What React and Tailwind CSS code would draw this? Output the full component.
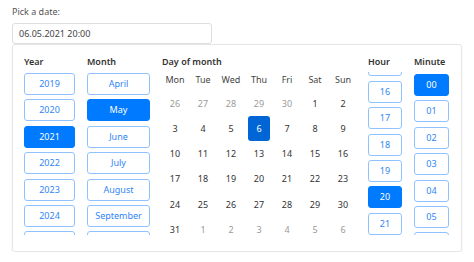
import React, { useEffect, useRef } from "react";

const years = [2019, 2020, 2021, 2022, 2023, 2024, 2025];
const months = ["April", "May", "June", "July", "August", "September", "October"];
const hours = [14, 15, 16, 17, 18, 19, 20, 21, 22];
const minutes = ["00", "01", "02", "03", "04", "05", "06"];
const weekdays = ["Mon", "Tue", "Wed", "Thu", "Fri", "Sat", "Sun"];

// 6 weeks, first row starts in April
const weeks = [
  [[26, 0], [27, 0], [28, 0], [29, 0], [30, 0], [1, 1], [2, 1]],
  [[3, 1], [4, 1], [5, 1], [6, 1], [7, 1], [8, 1], [9, 1]],
  [[10, 1], [11, 1], [12, 1], [13, 1], [14, 1], [15, 1], [16, 1]],
  [[17, 1], [18, 1], [19, 1], [20, 1], [21, 1], [22, 1], [23, 1]],
  [[24, 1], [25, 1], [26, 1], [27, 1], [28, 1], [29, 1], [30, 1]],
  [[31, 1], [1, 0], [2, 0], [3, 0], [4, 0], [5, 0], [6, 0]],
];

const PickButton = ({ label, active }) => (
  <button
    className={`h-[22px] w-full shrink-0 rounded-[3px] border text-center leading-[20px] ${
      active
        ? "border-[#007bff] bg-[#007bff] text-white"
        : "border-[#8fc3ff] bg-white text-[#2f86f6]"
    }`}
  >
    {label}
  </button>
);

const ScrollColumn = ({ title, items, selected, width, scroll = 0, pad = "pt-[1px]", className = "" }) => {
  const ref = useRef(null);

  useEffect(() => {
    if (ref.current) ref.current.scrollTop = scroll;
  }, [scroll]);

  return (
    <div className={`flex flex-col ${width} ${className}`}>
      <div className="h-[12px] font-semibold leading-[12px] text-[#333]">{title}</div>
      <div ref={ref} className="mt-[4px] h-[163px] overflow-hidden">
        <div className={`flex flex-col gap-[4.4px] ${pad}`}>
          {items.map((it) => (
            <PickButton key={it} label={it} active={it === selected} />
          ))}
        </div>
      </div>
    </div>
  );
};

export default function App() {
  return (
    <div className="bg-white px-3 pt-[6px] font-['Noto_Sans',sans-serif] text-[9px] text-[#333]">
      <div className="h-[12px] leading-[12px] text-[#555]">Pick a date:</div>

      <div className="mt-[5px] flex h-[21px] w-[200px] items-center rounded-[3px] border border-[#dedede] pl-[6px] text-[#444]">
        06.05.2021 20:00
      </div>

      {/* popup */}
      <div className="flex h-[208px] w-[450px] rounded-[3px] border border-[#e6e6e6] bg-white pl-[11px] pt-[11px] shadow-[0_1px_3px_rgba(0,0,0,0.05)]">
        <ScrollColumn title="Year" items={years} selected={2021} width="w-[51px]" />
        <ScrollColumn title="Month" items={months} selected="May" width="w-[63px]" className="ml-[12px]" />

        {/* day of month */}
        <div className="ml-[11px] flex w-[196px] flex-col">
          <div className="h-[12px] pl-[1px] font-semibold leading-[12px] text-[#333]">Day of month</div>
          <div className="grid h-[23px] grid-cols-7 items-center text-center text-[#444]">
            {weekdays.map((d) => (
              <span key={d}>{d}</span>
            ))}
          </div>
          {weeks.map((week, wi) => (
            <div key={wi} className="grid h-[25.2px] grid-cols-7 items-center text-center">
              {week.map(([d, cur], di) => {
                const sel = wi === 1 && d === 6;
                return (
                  <div key={di} className="flex items-center justify-center">
                    {sel ? (
                      <span className="flex h-[25px] w-[22px] items-center justify-center rounded-[3px] bg-[#0066d6] text-white">
                        {d}
                      </span>
                    ) : (
                      <span className={cur ? "text-[#333]" : "text-[#9a9a9a]"}>{d}</span>
                    )}
                  </div>
                );
              })}
            </div>
          ))}
        </div>

        <ScrollColumn title="Hour" items={hours} selected={20} width="w-[34px]" className="ml-[11px]" pad="pt-0" scroll={44} />
        <ScrollColumn title="Minute" items={minutes} selected="00" width="w-[35px]" className="ml-[12px]" pad="pt-[2px]" />
      </div>
    </div>
  );
}
